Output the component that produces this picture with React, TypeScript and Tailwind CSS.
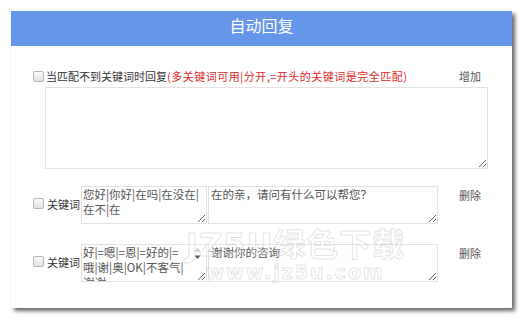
import { useState } from "react";

type Rule = {
  id: number;
  keyword: string;
  reply: string;
  scroll?: boolean;
};

const rules: Rule[] = [
  { id: 1, keyword: "您好|你好|在吗|在没在|\n在不|在", reply: "在的亲，请问有什么可以帮您？" },
  { id: 2, keyword: "好|=嗯|=恩|=好的|=\n哦|谢|奥|OK|不客气|\n谢谢", reply: "谢谢你的咨询", scroll: true },
];

function Check() {
  return (
    <span className="block w-[11px] h-[11px] shrink-0 rounded-[2px] border border-[#b5b5b5] bg-gradient-to-b from-[#fafafa] to-[#e2e2e2]" />
  );
}

function RuleRow({ rule }: { rule: Rule }) {
  return (
    <div className="flex items-start">
      <div className="flex items-center h-[35px] pl-[22px] w-[70px] shrink-0">
        <Check />
        <span className="ml-[3px] text-[11px] leading-[14px] text-[#333]">关键词</span>
      </div>
      <div className="relative w-[126px] h-[38px] shrink-0">
        <textarea
          defaultValue={rule.keyword}
          className={`block w-full h-full border border-[#e2e2e2] bg-white text-[11.5px] leading-[15px] text-[#555] pl-[1px] pt-0 overflow-hidden outline-none ${rule.scroll ? 'pr-[16px]' : 'pr-[2px]'}`}
        />
        {rule.scroll && (
          <div className="absolute right-[6px] top-[3px] flex flex-col items-center gap-[3px]">
            <svg width="7" height="5" viewBox="0 0 7 5"><path d="M0.5 4.5 L3.5 1 L6.5 4.5 Z" fill="#c8c8c8" /></svg>
            <svg width="7" height="5" viewBox="0 0 7 5"><path d="M0.5 0.5 L3.5 4 L6.5 0.5 Z" fill="#555" /></svg>
          </div>
        )}
      </div>
      <textarea
        defaultValue={rule.reply}
        className="block ml-[1px] w-[230px] h-[38px] shrink-0 border border-[#e2e2e2] bg-white text-[11.5px] leading-[15px] text-[#555] pl-[2px] pt-0 overflow-hidden outline-none"
      />
      <button className="ml-[21px] mt-[2px] text-[11px] leading-[14px] text-[#555]">删除</button>
    </div>
  );
}

export default function App() {
  const [items] = useState(rules);

  return (
    <div className="relative w-[523px] h-[319px] bg-white overflow-hidden font-['Noto_Sans_CJK_SC','Microsoft_YaHei',sans-serif]">
      <div className="ml-[11px] mt-[11px] w-[501px] h-[297px] bg-white shadow-[3px_3px_4px_rgba(0,0,0,0.6)]">
        <div className="h-[35px] bg-[#6596e9] pt-[3px] text-center text-[16px] leading-[22px] text-white">
          自动回复
        </div>

        <div className="pt-[23px]">
          <div className="flex items-center justify-between pl-[22px] pr-[31px] h-[14px]">
            <div className="flex items-center">
              <Check />
              <span className="ml-[2px] text-[11px] leading-[14px] text-[#333]">
                当匹配不到关键词时回复
                <span className="text-[#dd2a2a] tracking-[0.5px]">(多关键词可用|分开,=开头的关键词是完全匹配)</span>
              </span>
            </div>
            <button className="text-[11px] leading-[14px] text-[#555]">增加</button>
          </div>

          <textarea className="block ml-[34px] mt-[4px] w-[443px] h-[82px] border border-[#e2e2e2] bg-white outline-none" />

          <div className="mt-[17px] flex flex-col gap-[20px]">
            {items.map((r) => (
              <RuleRow key={r.id} rule={r} />
            ))}
          </div>
        </div>
      </div>

      <div className="pointer-events-none absolute left-[186px] top-[228px] flex flex-col items-center font-['DejaVu_Sans','Noto_Sans_CJK_SC',sans-serif] font-bold text-white/30 [-webkit-text-stroke:1px_rgba(175,175,175,0.35)]">
        <span className="text-[32px] leading-[34px] tracking-[1px]">JZ5U绿色下载</span>
        <span className="text-[19px] leading-[20px] tracking-[2px]">www.jz5u.com</span>
      </div>
    </div>
  );
}
